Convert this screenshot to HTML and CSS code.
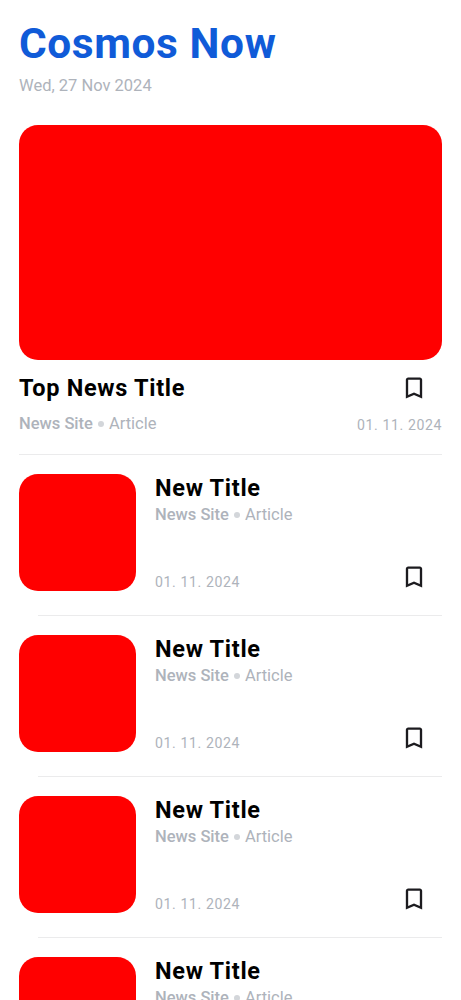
FILE: index.html
```html
<!DOCTYPE html>
<html lang="en">
<head>
<meta charset="utf-8">
<title>Cosmos Now</title>
<link rel="stylesheet" href="styles.css">
</head>
<body>
<main class="screen">
  <header class="header">
    <h1 class="brand">Cosmos Now</h1>
    <p class="today">Wed, 27 Nov 2024</p>
  </header>
  <article class="top">
    <div class="top-image"></div>
    <div class="top-row">
      <h2 class="title">Top News Title</h2>
      <svg class="bookmark" viewBox="0 0 24 24"><path d="M17 3H7c-1.100 0-2 .9-2 2v16l7-3 7 3V5c0-1.100-.9-2-2-2zm0 15-5-2.180L7 18V5h10z"/></svg>
    </div>
    <div class="top-meta">
      <p class="source"><b>News Site</b><i class="dot"></i>Article</p>
      <time class="date">01. 11. 2024</time>
    </div>
  </article>
  <article class="item">
    <div class="thumb"></div>
    <div class="body">
      <h2 class="title">New Title</h2>
      <p class="source"><b>News Site</b><i class="dot"></i>Article</p>
      <div class="foot"><time class="date">01. 11. 2024</time><svg class="bookmark" viewBox="0 0 24 24"><path d="M17 3H7c-1.100 0-2 .9-2 2v16l7-3 7 3V5c0-1.100-.9-2-2-2zm0 15-5-2.180L7 18V5h10z"/></svg></div>
    </div>
  </article>
  <article class="item">
    <div class="thumb"></div>
    <div class="body">
      <h2 class="title">New Title</h2>
      <p class="source"><b>News Site</b><i class="dot"></i>Article</p>
      <div class="foot"><time class="date">01. 11. 2024</time><svg class="bookmark" viewBox="0 0 24 24"><path d="M17 3H7c-1.100 0-2 .9-2 2v16l7-3 7 3V5c0-1.100-.9-2-2-2zm0 15-5-2.180L7 18V5h10z"/></svg></div>
    </div>
  </article>
  <article class="item">
    <div class="thumb"></div>
    <div class="body">
      <h2 class="title">New Title</h2>
      <p class="source"><b>News Site</b><i class="dot"></i>Article</p>
      <div class="foot"><time class="date">01. 11. 2024</time><svg class="bookmark" viewBox="0 0 24 24"><path d="M17 3H7c-1.100 0-2 .9-2 2v16l7-3 7 3V5c0-1.100-.9-2-2-2zm0 15-5-2.180L7 18V5h10z"/></svg></div>
    </div>
  </article>
  <article class="item">
    <div class="thumb"></div>
    <div class="body">
      <h2 class="title">New Title</h2>
      <p class="source"><b>News Site</b><i class="dot"></i>Article</p>
      <div class="foot"><time class="date">01. 11. 2024</time><svg class="bookmark" viewBox="0 0 24 24"><path d="M17 3H7c-1.100 0-2 .9-2 2v16l7-3 7 3V5c0-1.100-.9-2-2-2zm0 15-5-2.180L7 18V5h10z"/></svg></div>
    </div>
  </article>
</main>
</body>
</html>
```
FILE: styles.css
```css
* { box-sizing: border-box; margin: 0; padding: 0; }
body { background: #fff; font-family: Roboto, sans-serif; color: #000; }
.screen { height: 1000px; overflow: hidden; padding: 19px 19px 0; }
.header { height: 106px; }
.brand { font-size: 42.400px; line-height: 50px; font-weight: 700; letter-spacing: 0.600px; color: #105bd8; }
.today { margin-top: 6px; font-size: 16.500px; line-height: 21px; color: #aeb3bb; }
.top { height: 330px; border-bottom: 1px solid #ebebec; }
.top-image { height: 235px; border-radius: 19px; background: #f00; }
.top-row { display: flex; justify-content: space-between; padding: 14px 14px 0 0; }
.title { font-size: 23.500px; line-height: 28px; font-weight: 700; letter-spacing: 0.700px; white-space: nowrap; }
.bookmark { width: 28px; height: 28px; fill: #1c1b1f; display: block; }
.top-meta { display: flex; justify-content: space-between; margin-top: 11px; }
.source { display: flex; align-items: center; font-size: 16.500px; line-height: 20px; color: #aeb3bb; white-space: nowrap; }
.source b { font-weight: 500; }
.dot { width: 6px; height: 6px; border-radius: 50%; background: #d3d6da; margin: 0 5px; }
.date { font-size: 14.100px; line-height: 20px; letter-spacing: 0.600px; color: #aeb3bb; }
.top-meta .date { margin-top: 2px; }
.item { display: flex; gap: 19px; height: 161px; padding-top: 19px; background: linear-gradient(#ebebec, #ebebec) 19px 100% / 100% 1px no-repeat; }
.thumb { flex: none; width: 117px; height: 117.400px; border-radius: 19px; background: #f00; }
.body { flex: 1; height: 117.500px; display: flex; flex-direction: column; }
.body .source { margin-top: 3px; }
.foot { display: flex; justify-content: space-between; align-items: center; margin-top: auto; padding-right: 14px; }
.foot .date { margin-top: 9px; }
```
